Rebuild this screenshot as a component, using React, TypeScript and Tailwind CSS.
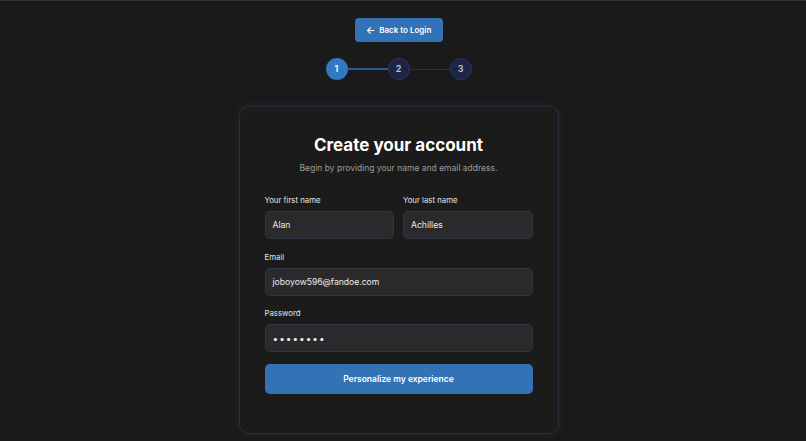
import React from "react";

function Field({ label, value, type = "text" }: { label: string; value: string; type?: string }) {
  return (
    <div className="flex flex-col">
      <label className="text-[7.8px] leading-[11px] text-[#e4e4e4] mb-[5px]">{label}</label>
      <div className="h-[28px] rounded-[5px] border border-[#2f3542] bg-[#2a2a2c] px-[7px] flex items-center text-[8.6px] text-[#ececec]">
        {type === "password" ? <span className="tracking-[1px] text-[10px]">••••••••</span> : value}
      </div>
    </div>
  );
}

export default function App() {
  return (
    <div
      className="w-[806px] h-[441px] bg-[#1a1a1a] border-t border-[#333] flex flex-col items-center overflow-hidden pr-[9px]"
      style={{ fontFamily: "Inter, 'Noto Sans', sans-serif" }}
    >
      <button className="mt-[17px] h-[24px] w-[88px] rounded-[4px] bg-[#3273b8] text-white text-[8px] font-semibold flex items-center justify-center gap-[4px]">
        <span className="text-[10px] leading-none">←</span> Back to Login
      </button>

      {/* stepper */}
      <div className="mt-[16px] flex items-center">
        <div className="w-[22px] h-[22px] rounded-full bg-[#3378c0] text-white text-[9px] font-semibold flex items-center justify-center">1</div>
        <div className="w-[40px] h-[2px] bg-[#2c5a8c]" />
        <div className="w-[22px] h-[22px] rounded-full bg-[#1d2446] border border-[#2d3560] text-[#c4c8dc] text-[9px] font-semibold flex items-center justify-center">2</div>
        <div className="w-[40px] h-px bg-[#2a3047]" />
        <div className="w-[22px] h-[22px] rounded-full bg-[#1d2446] border border-[#2d3560] text-[#c4c8dc] text-[9px] font-semibold flex items-center justify-center">3</div>
      </div>

      {/* card */}
      <div className="mt-[26px] w-[320px] h-[328px] rounded-[10px] border border-[#262f3d] bg-[#1b1b1b] shadow-[0_0_8px_rgba(40,60,90,0.35)] px-[25px] pt-[27px]">
        <h1 className="text-center text-[17px] leading-[22px] font-bold text-white">Create your account</h1>
        <p className="mt-[6px] text-center text-[8.5px] leading-[13px] text-[#9c9c9c]">Begin by providing your name and email address.</p>

        <div className="mt-[20px] grid grid-cols-2 gap-[9px]">
          <Field label="Your first name" value="Alan" />
          <Field label="Your last name" value="Achilles" />
        </div>
        <div className="mt-[13px]">
          <Field label="Email" value="joboyow596@fandoe.com" />
        </div>
        <div className="mt-[12px]">
          <Field label="Password" value="" type="password" />
        </div>

        <button className="mt-[12px] w-full h-[30px] rounded-[5px] bg-[#3272b5] text-white text-[8.5px] font-semibold">
          Personalize my experience
        </button>
      </div>
    </div>
  );
}
